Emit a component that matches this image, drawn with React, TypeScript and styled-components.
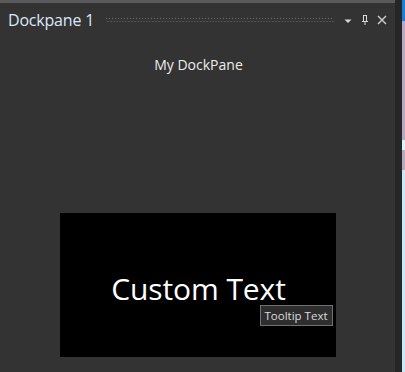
import React from "react";
import styled, { createGlobalStyle } from "styled-components";

const Global = createGlobalStyle`
  html, body { margin: 0; padding: 0; background: #333333; }
  body { font-family: "Open Sans", "Noto Sans", sans-serif; }
`;

const Frame = styled.div`
  display: flex;
  width: 405px;
  height: 372px;
  overflow: hidden;
`;

const Pane = styled.div`
  width: 395px;
  display: flex;
  flex-direction: column;
  background: #333333;
  border-top: 3px solid #5a5a5c;
`;

const Splitter = styled.div`
  width: 7px;
  background: #262626;
`;

const Edge = styled.div`
  width: 3px;
  background: linear-gradient(
    to bottom,
    #1c7fd6 0 21px,
    #b8a9c2 21px 140px,
    #dff2fb 140px 150px,
    #b8a9c2 150px 170px,
    #c8e8f8 170px 100%
  );
`;

const Header = styled.div`
  height: 34px;
  display: flex;
  align-items: center;
  padding: 0 8px 0 8px;
  gap: 8px;
`;

const Title = styled.span`
  font-size: 16px;
  color: #dbe8f8;
  letter-spacing: -0.2px;
  line-height: 1;
  margin-top: -1px;
`;

const Grip = styled.div`
  flex: 1;
  height: 4px;
  margin: 0 1px 0 4px;
  background-image:
    linear-gradient(to right, #707070 1px, transparent 1px),
    linear-gradient(to right, #707070 1px, transparent 1px);
  background-size: 3px 1px, 3px 1px;
  background-position: 0 0, 1.5px 3px;
  background-repeat: repeat-x;
`;

const Tools = styled.div`
  display: flex;
  align-items: center;
  gap: 7px;
`;

const ToolIcon = styled.svg`
  display: block;
  width: 10px;
  height: 10px;
`;

const Body = styled.div`
  flex: 1;
  display: flex;
  flex-direction: column;
  align-items: center;
`;

const Label = styled.div`
  margin-top: 18px;
  font-size: 14px;
  color: #ececec;
  line-height: 20px;
  margin-left: 2px;
`;

const Canvas = styled.div`
  position: relative;
  margin-top: auto;
  margin-bottom: 15px;
  width: 276px;
  height: 144px;
  background: #000;
  display: flex;
  align-items: center;
  justify-content: center;
`;

const Big = styled.div`
  font-size: 30px;
  color: #ffffff;
  margin-top: 6px;
  margin-left: 2px;
  letter-spacing: -0.1px;
`;

const Tooltip = styled.div`
  position: absolute;
  left: 200px;
  top: 92px;
  height: 19px;
  padding: 0 4px;
  display: flex;
  align-items: center;
  background: #2e2e2e;
  border: 1px solid #717171;
  font-size: 11.5px;
  color: #dcdcdc;
  white-space: nowrap;
`;

export default function App() {
  return (
    <>
      <Global />
      <Frame>
        <Pane>
          <Header>
            <Title>Dockpane 1</Title>
            <Grip />
            <Tools>
              <ToolIcon viewBox="0 0 10 10">
                <path d="M1.5 4.5 L8.5 4.5 L5 8 Z" fill="#d8d8d8" />
              </ToolIcon>
              <ToolIcon viewBox="0 0 10 10">
                <path
                  d="M3 0.5 H7 M3.5 0.5 V6 M6.5 0.5 V6 M2 6.5 H8 M5 6.5 V10"
                  stroke="#d8d8d8"
                  strokeWidth="1"
                  fill="none"
                />
              </ToolIcon>
              <ToolIcon viewBox="0 0 10 10">
                <path d="M1 1 L9 9 M9 1 L1 9" stroke="#d0d0d0" strokeWidth="1.4" fill="none" />
              </ToolIcon>
            </Tools>
          </Header>
          <Body>
            <Label>My DockPane</Label>
            <Canvas>
              <Big>Custom Text</Big>
              <Tooltip>Tooltip Text</Tooltip>
            </Canvas>
          </Body>
        </Pane>
        <Splitter />
        <Edge />
      </Frame>
    </>
  );
}
